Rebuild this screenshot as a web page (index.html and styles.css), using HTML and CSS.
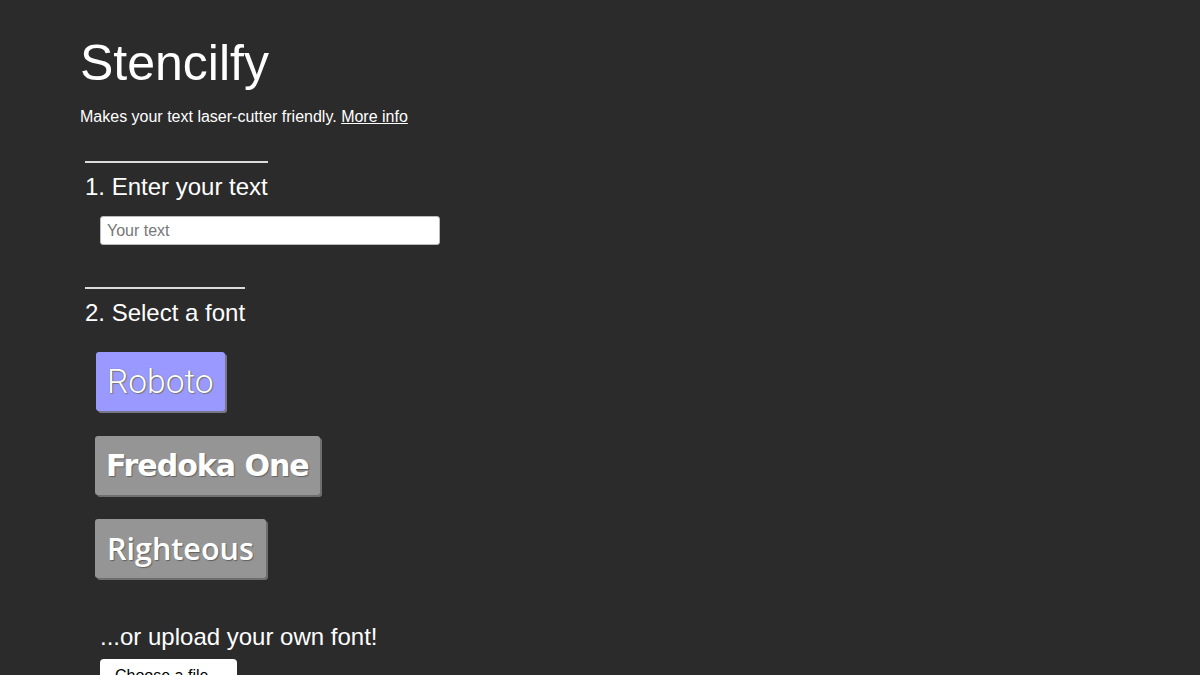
FILE: index.html
```html
<!DOCTYPE html>
<html lang="en">
<head>
<meta charset="utf-8">
<title>Stencilfy</title>
<link rel="stylesheet" href="styles.css">
</head>
<body>
<main class="app">
  <h1 class="title">Stencilfy</h1>
  <p class="tagline">Makes your text laser-cutter friendly. <a href="#" class="link">More info</a></p>

  <section class="step step-text">
    <h2 class="step-title">1. Enter your text</h2>
    <input class="text-input" type="text" placeholder="Your text">
  </section>

  <section class="step step-font">
    <h2 class="step-title">2. Select a font</h2>
    <div class="font-list">
      <button class="font-btn font-roboto is-selected">Roboto</button>
      <button class="font-btn font-fredoka">Fredoka One</button>
      <button class="font-btn font-righteous">Righteous</button>
    </div>
    <h2 class="upload-title">...or upload your own font!</h2>
    <label class="file-btn">Choose a file...</label>
  </section>
</main>
</body>
</html>
```

FILE: styles.css
```css
html, body {
  margin: 0;
  padding: 0;
  background: #2b2b2b;
  color: #fff;
  font-family: "Liberation Sans", Arial, sans-serif;
}

.app {
  padding: 34px 80px 0;
}

.title {
  margin: 0;
  font-size: 50px;
  font-weight: normal;
  line-height: normal;
}

.tagline {
  margin: 16px 0 0;
  font-size: 16px;
  line-height: normal;
}

.link {
  color: #fff;
  text-decoration: underline;
}

.step {
  margin-left: 5px;
}

.step-text {
  margin-top: 35px;
}

.step-font {
  margin-top: 42px;
}

.step-title {
  display: inline-block;
  margin: 0;
  padding-top: 10px;
  border-top: 2px solid #dcdcdc;
  font-size: 24px;
  font-weight: normal;
  line-height: normal;
}

.text-input {
  display: block;
  box-sizing: border-box;
  margin: 15px 0 0 15px;
  width: 340px;
  height: 29px;
  padding: 3px 6px;
  border: 1px solid #bbb;
  border-radius: 3px;
  background: #fff;
  font-family: "Liberation Sans", Arial, sans-serif;
  font-size: 16px;
  color: #222;
}

.text-input::placeholder {
  color: #777;
}

.font-list {
  display: flex;
  flex-direction: column;
  align-items: flex-start;
  gap: 24.5px;
  margin: 25px 0 0 10px;
}

.font-btn {
  box-sizing: border-box;
  height: 59px;
  padding: 9px 11px;
  border: none;
  border-radius: 3px;
  background: #959595;
  color: #fff;
  line-height: 41px;
  box-shadow: 2px 2px 0 #6e6e6e;
  text-shadow: 1px 1px 1px rgba(0, 0, 0, 0.35);
  cursor: pointer;
}

.font-roboto {
  margin-left: 1px;
  padding: 9px 11px;
  font-family: Roboto, sans-serif;
  font-weight: 300;
  font-size: 33.5px;
  text-shadow: 0 0 1px #666, 1px 1px 1px #777;
}

.is-selected {
  background: #9999ff;
  box-shadow: 2px 2px 0 #77778a;
}

.font-fredoka {
  font-family: "DejaVu Sans", sans-serif;
  font-weight: bold;
  font-size: 30px;
  letter-spacing: -1px;
}

.font-righteous {
  padding: 9px 12px;
  font-family: "Open Sans", sans-serif;
  font-weight: 600;
  font-size: 30.5px;
}

.upload-title {
  margin: 45px 0 0 15px;
  font-size: 24px;
  font-weight: normal;
  line-height: normal;
}

.file-btn {
  display: inline-block;
  margin: 8px 0 0 15px;
  padding: 8px 15px;
  background: #fff;
  border-radius: 4px;
  color: #000;
  font-size: 16px;
}
```
